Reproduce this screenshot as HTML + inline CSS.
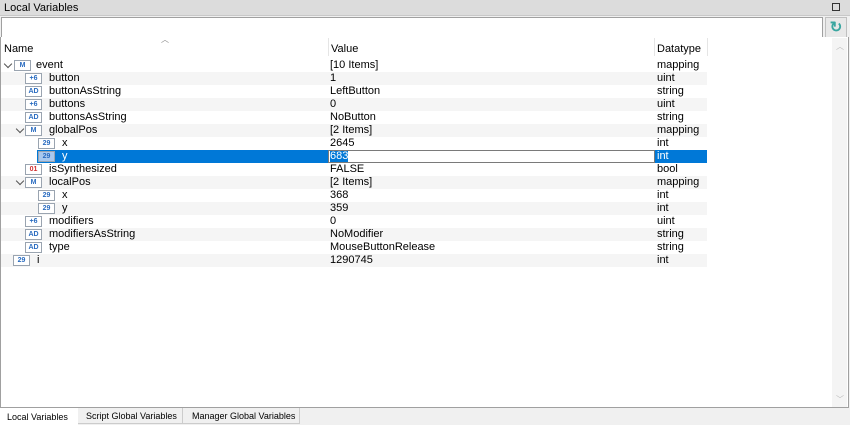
<!DOCTYPE html>
<html><head><style>
body{margin:0;width:850px;height:425px;background:#f0f0f0;font-family:"Liberation Sans",sans-serif;font-size:11px;color:#000;position:relative;overflow:hidden}
.a{position:absolute}
.row{position:absolute;left:1px;width:706px;height:13px}
.row.g{background:#f5f5f5}
.t{position:absolute;top:0;line-height:13px;white-space:nowrap}
.ic{position:absolute;top:1px;width:15px;height:9px;border:1px solid #9aa4b0;background:#fff;font-size:7px;line-height:9px;text-align:center;color:#2a6cc0;font-weight:bold}
.ar{position:absolute;top:2px;width:5px;height:5px;border-right:1px solid #555;border-bottom:1px solid #555;transform:rotate(45deg)}
</style></head><body>
<div class="a" style="left:0;top:0;width:850px;height:15px;background:#dcdcdc;border-bottom:1px solid #c8c8c8"></div>
<div class="a" style="left:4px;top:1px;line-height:14px;font-size:11px">Local Variables</div>
<div class="a" style="left:832px;top:3px;width:6px;height:6px;border:1px solid #333"></div>
<div class="a" style="left:1px;top:17px;width:820px;height:19px;background:#fff;border:1px solid #a0a0a0"></div>
<div class="a" style="left:825px;top:17px;width:20px;height:20px;background:#e8e8e8;border:1px solid #c0c0c0;color:#3aa6a0;font-size:15px;line-height:19px;text-align:center;font-weight:bold">↻</div>
<div class="a" style="left:0;top:37px;width:847px;height:370px;background:#fff;border:1px solid #a0a0a0;border-top:none"></div>
<div class="a" style="left:832px;top:38px;width:15px;height:369px;background:#f4f4f4"></div>
<div class="a" style="left:836px;top:41px;color:#bbb;font-size:8px">︿</div>
<div class="a" style="left:836px;top:394px;color:#bbb;font-size:8px">﹀</div>
<div class="a" style="left:161px;top:34px;color:#888;font-size:8px">︿</div>
<div class="a" style="left:4px;top:42px;line-height:14px">Name</div>
<div class="a" style="left:328px;top:38px;width:1px;height:18px;background:#e5e5e5"></div>
<div class="a" style="left:331px;top:42px;line-height:14px">Value</div>
<div class="a" style="left:654px;top:38px;width:1px;height:18px;background:#e5e5e5"></div>
<div class="a" style="left:657px;top:42px;line-height:14px">Datatype</div>
<div class="a" style="left:707px;top:38px;width:1px;height:18px;background:#e5e5e5"></div>

<div class="row" style="top:59px"><div class="ar" style="left:4px"></div><div class="ic" style="left:13px">M</div><div class="t" style="left:35px">event</div><div class="t" style="left:329px">[10 Items]</div><div class="t" style="left:656px">mapping</div></div>
<div class="row g" style="top:72px"><div class="ic" style="left:24px">+6</div><div class="t" style="left:48px">button</div><div class="t" style="left:329px">1</div><div class="t" style="left:656px">uint</div></div>
<div class="row" style="top:85px"><div class="ic" style="left:24px">AD</div><div class="t" style="left:48px">buttonAsString</div><div class="t" style="left:329px">LeftButton</div><div class="t" style="left:656px">string</div></div>
<div class="row g" style="top:98px"><div class="ic" style="left:24px">+6</div><div class="t" style="left:48px">buttons</div><div class="t" style="left:329px">0</div><div class="t" style="left:656px">uint</div></div>
<div class="row" style="top:111px"><div class="ic" style="left:24px">AD</div><div class="t" style="left:48px">buttonsAsString</div><div class="t" style="left:329px">NoButton</div><div class="t" style="left:656px">string</div></div>
<div class="row g" style="top:124px"><div class="ar" style="left:16px"></div><div class="ic" style="left:24px">M</div><div class="t" style="left:48px">globalPos</div><div class="t" style="left:329px">[2 Items]</div><div class="t" style="left:656px">mapping</div></div>
<div class="row" style="top:137px"><div class="ic" style="left:37px">29</div><div class="t" style="left:61px">x</div><div class="t" style="left:329px">2645</div><div class="t" style="left:656px">int</div></div>
<div class="row" style="top:150px"><div class="a" style="left:36px;top:0;width:670px;height:13px;background:#0078d7"></div><div class="ic" style="left:37px;background:#a8c8ee">29</div><div class="t" style="left:61px;color:#fff">y</div><div class="a" style="left:327px;top:0;width:325px;height:11px;background:#fff;border:1px solid #7a7a7a"></div><div class="t" style="left:329px;top:1px;line-height:11px;background:#0078d7;color:#fff">683</div><div class="t" style="left:656px;color:#fff">int</div></div>
<div class="row" style="top:163px"><div class="ic" style="left:24px;color:#d03030">01</div><div class="t" style="left:48px">isSynthesized</div><div class="t" style="left:329px">FALSE</div><div class="t" style="left:656px">bool</div></div>
<div class="row g" style="top:176px"><div class="ar" style="left:16px"></div><div class="ic" style="left:24px">M</div><div class="t" style="left:48px">localPos</div><div class="t" style="left:329px">[2 Items]</div><div class="t" style="left:656px">mapping</div></div>
<div class="row" style="top:189px"><div class="ic" style="left:37px">29</div><div class="t" style="left:61px">x</div><div class="t" style="left:329px">368</div><div class="t" style="left:656px">int</div></div>
<div class="row g" style="top:202px"><div class="ic" style="left:37px">29</div><div class="t" style="left:61px">y</div><div class="t" style="left:329px">359</div><div class="t" style="left:656px">int</div></div>
<div class="row" style="top:215px"><div class="ic" style="left:24px">+6</div><div class="t" style="left:48px">modifiers</div><div class="t" style="left:329px">0</div><div class="t" style="left:656px">uint</div></div>
<div class="row g" style="top:228px"><div class="ic" style="left:24px">AD</div><div class="t" style="left:48px">modifiersAsString</div><div class="t" style="left:329px">NoModifier</div><div class="t" style="left:656px">string</div></div>
<div class="row" style="top:241px"><div class="ic" style="left:24px">AD</div><div class="t" style="left:48px">type</div><div class="t" style="left:329px">MouseButtonRelease</div><div class="t" style="left:656px">string</div></div>
<div class="row g" style="top:254px"><div class="ic" style="left:12px">29</div><div class="t" style="left:36px">i</div><div class="t" style="left:329px">1290745</div><div class="t" style="left:656px">int</div></div>

<div class="a" style="left:0;top:408px;width:78px;height:17px;background:#fff"></div>
<div class="a" style="left:7px;top:412px;font-size:9px">Local Variables</div>
<div class="a" style="left:78px;top:408px;width:104px;height:15px;border-right:1px solid #ccc;border-bottom:1px solid #ccc"></div>
<div class="a" style="left:86px;top:411px;font-size:9px">Script Global Variables</div>
<div class="a" style="left:183px;top:408px;width:116px;height:15px;border-right:1px solid #ccc;border-bottom:1px solid #ccc"></div>
<div class="a" style="left:192px;top:411px;font-size:9px">Manager Global Variables</div>
</body></html>
